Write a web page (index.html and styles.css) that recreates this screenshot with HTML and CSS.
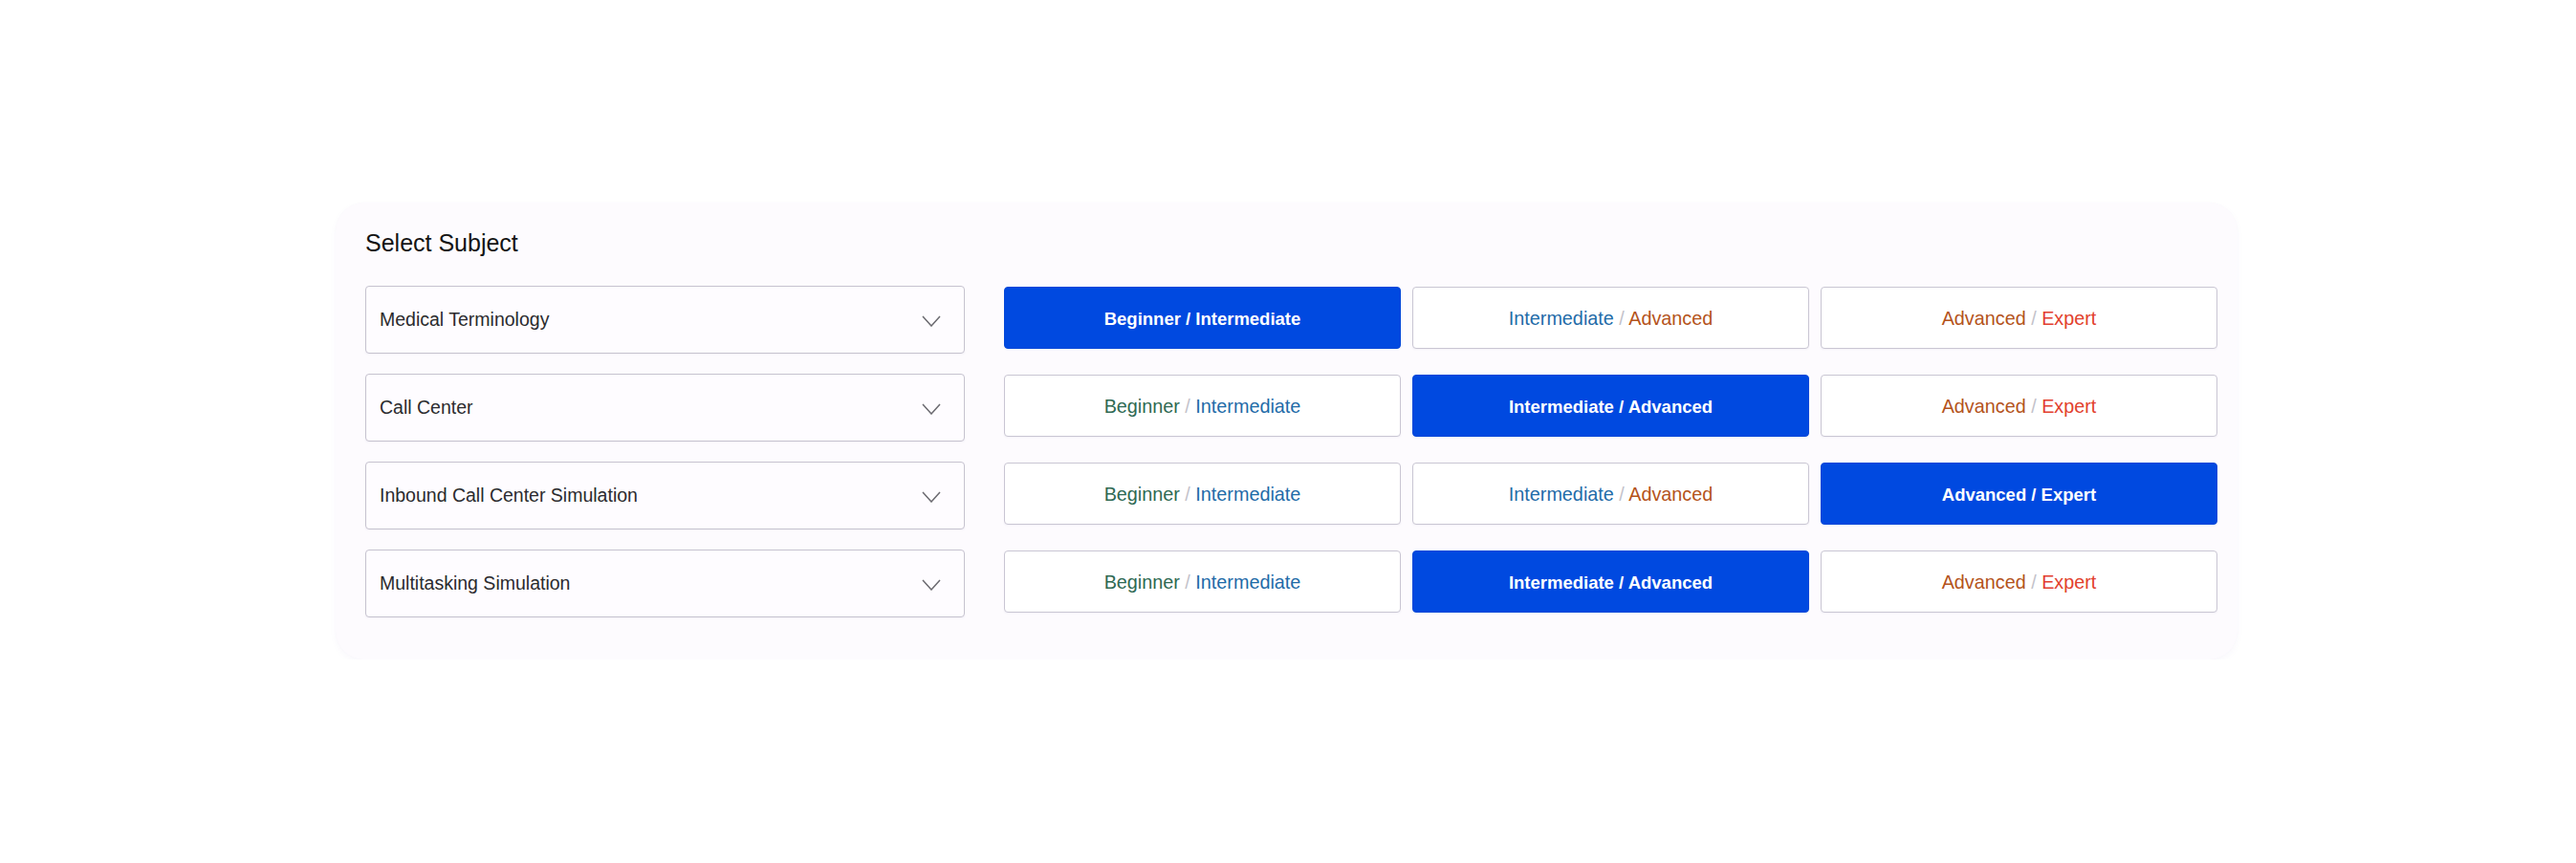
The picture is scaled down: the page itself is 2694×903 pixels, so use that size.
FILE: index.html
```html
<!DOCTYPE html>
<html lang="en">
<head>
<meta charset="utf-8">
<title>Select Subject</title>
<link rel="stylesheet" href="styles.css">
</head>
<body>
<main class="page">
  <section class="card">
    <h2 class="title">Select Subject</h2>
    <div class="grid">
      <div class="select"><span class="select-label">Medical Terminology</span><svg class="chev" viewBox="0 0 20 12" width="20" height="12"><path d="M1 1 L10 11 L19 1" fill="none" stroke="#6b6a70" stroke-width="1.5"/></svg></div>
      <div class="levels">
        <button class="level selected">Beginner / Intermediate</button>
        <button class="level"><span class="c-int">Intermediate</span> <span class="sep">/</span> <span class="c-adv">Advanced</span></button>
        <button class="level"><span class="c-adv">Advanced</span> <span class="sep">/</span> <span class="c-exp">Expert</span></button>
      </div>

      <div class="select"><span class="select-label">Call Center</span><svg class="chev" viewBox="0 0 20 12" width="20" height="12"><path d="M1 1 L10 11 L19 1" fill="none" stroke="#6b6a70" stroke-width="1.5"/></svg></div>
      <div class="levels">
        <button class="level"><span class="c-beg">Beginner</span> <span class="sep">/</span> <span class="c-int">Intermediate</span></button>
        <button class="level selected">Intermediate / Advanced</button>
        <button class="level"><span class="c-adv">Advanced</span> <span class="sep">/</span> <span class="c-exp">Expert</span></button>
      </div>

      <div class="select"><span class="select-label">Inbound Call Center Simulation</span><svg class="chev" viewBox="0 0 20 12" width="20" height="12"><path d="M1 1 L10 11 L19 1" fill="none" stroke="#6b6a70" stroke-width="1.5"/></svg></div>
      <div class="levels">
        <button class="level"><span class="c-beg">Beginner</span> <span class="sep">/</span> <span class="c-int">Intermediate</span></button>
        <button class="level"><span class="c-int">Intermediate</span> <span class="sep">/</span> <span class="c-adv">Advanced</span></button>
        <button class="level selected">Advanced / Expert</button>
      </div>

      <div class="select"><span class="select-label">Multitasking Simulation</span><svg class="chev" viewBox="0 0 20 12" width="20" height="12"><path d="M1 1 L10 11 L19 1" fill="none" stroke="#6b6a70" stroke-width="1.5"/></svg></div>
      <div class="levels">
        <button class="level"><span class="c-beg">Beginner</span> <span class="sep">/</span> <span class="c-int">Intermediate</span></button>
        <button class="level selected">Intermediate / Advanced</button>
        <button class="level"><span class="c-adv">Advanced</span> <span class="sep">/</span> <span class="c-exp">Expert</span></button>
      </div>
    </div>
  </section>
</main>
</body>
</html>
```

FILE: styles.css
```css
html, body {
  margin: 0;
  padding: 0;
  background: #ffffff;
}

.page {
  padding: 212px 0 0 351px;
  font-family: "Liberation Sans", Arial, sans-serif;
}

.card {
  box-sizing: border-box;
  width: 1989px;
  height: 478px;
  padding: 28px 21px 44px 31px;
  background: #fdfbfe;
  border-radius: 30px;
  box-shadow: 0 3px 6px rgba(130, 110, 200, 0.05), 0 0 1px rgba(130, 110, 200, 0.05);
}

.title {
  margin: 0 0 30px 0;
  font-size: 25px;
  line-height: 29px;
  font-weight: normal;
  color: #141414;
}

.grid {
  display: grid;
  grid-template-columns: 627px 1fr;
  column-gap: 41px;
  row-gap: 21px;
}

.select {
  box-sizing: border-box;
  height: 71px;
  display: flex;
  align-items: center;
  justify-content: space-between;
  padding: 0 24px 0 14px;
  background: #fefcff;
  border: 1px solid #c6c3cf;
  border-radius: 4px;
  box-shadow: 0 1px 2px rgba(90, 80, 140, 0.06);
}

.select-label {
  font-size: 19.5px;
  color: #2b2b2e;
}

.chev {
  display: block;
  margin-top: 2px;
}

.levels {
  display: grid;
  grid-template-columns: repeat(3, 1fr);
  column-gap: 12px;
  align-items: start;
  padding-top: 1px;
}

.level {
  box-sizing: border-box;
  height: 65px;
  margin: 0;
  padding: 2px 0 0 0;
  background: #ffffff;
  border: 1px solid #c9c6d3;
  border-radius: 4px;
  font-family: "Liberation Sans", Arial, sans-serif;
  font-size: 19.8px;
  color: #333;
  text-align: center;
  box-shadow: 0 1px 2px rgba(90, 80, 140, 0.06);
}

.level.selected {
  background: #0049e0;
  border-color: #0046d8;
  color: #ffffff;
  font-weight: bold;
  font-size: 18.5px;
}

.c-beg { color: #2f6953; }
.c-int { color: #1f6ba8; }
.c-adv { color: #b4531b; }
.c-exp { color: #e2402e; }
.sep { color: #c3c2ca; }
```
